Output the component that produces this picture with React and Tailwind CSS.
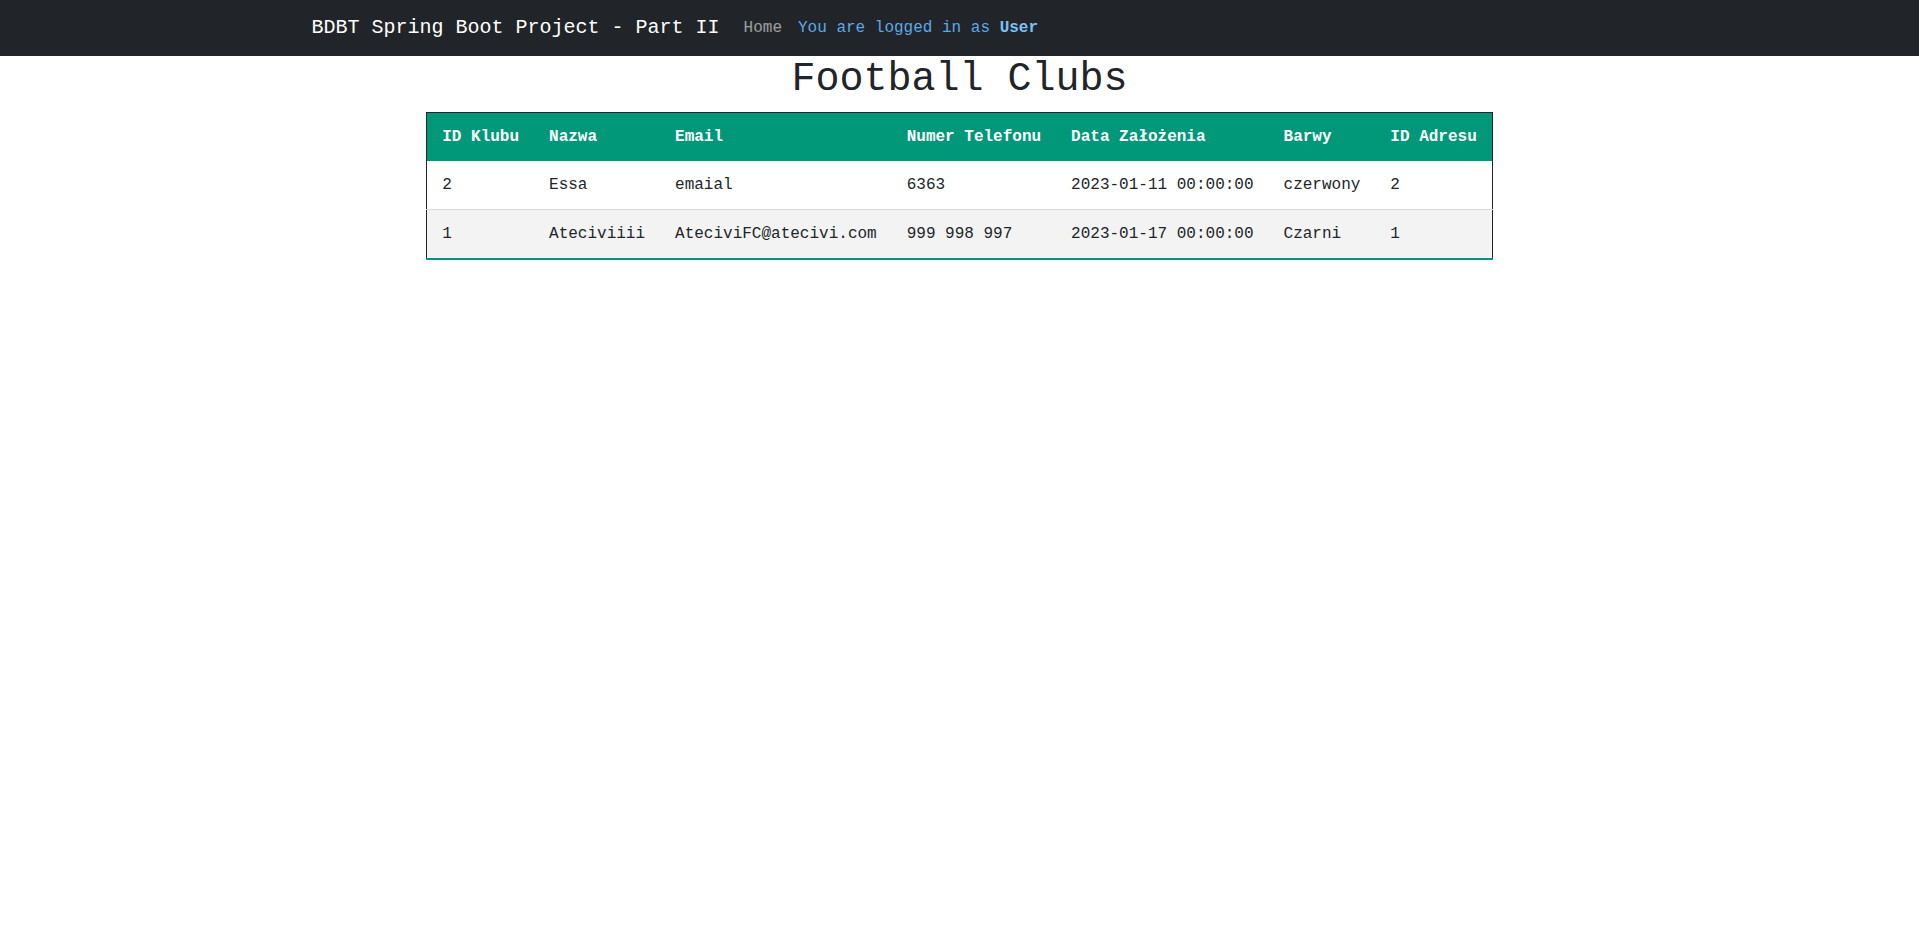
const clubs = [
  { id: 2, nazwa: 'Essa', email: 'emaial', tel: '6363', data: '2023-01-11 00:00:00', barwy: 'czerwony', adres: 2 },
  { id: 1, nazwa: 'Ateciviiii', email: 'AteciviFC@atecivi.com', tel: '999 998 997', data: '2023-01-17 00:00:00', barwy: 'Czarni', adres: 1 },
]

const headers = ['ID Klubu', 'Nazwa', 'Email', 'Numer Telefonu', 'Data Założenia', 'Barwy', 'ID Adresu']

export default function App() {
  return (
    <div className="bg-white text-[#212529] font-['Liberation_Mono','Courier_New',monospace]">
      <nav className="bg-[#212529] py-2">
        <div className="mx-auto flex max-w-[1320px] items-center px-3">
          <span className="mr-4 py-[5px] text-[20px] leading-[30px] text-white">
            BDBT Spring Boot Project - Part II
          </span>
          <a className="px-2 py-2 text-base leading-6 text-white/55">Home</a>
          <span className="px-2 py-2 text-base leading-6 text-[#5fa8e8]">
            You are logged in as <b className="text-[#7cc0f5]">User</b>
          </span>
        </div>
      </nav>

      <h1 className="mb-2 text-center text-[40px] leading-[48px] font-normal">Football Clubs</h1>

      <table className="mx-auto border-collapse border border-[#212529] text-base leading-6">
        <thead>
          <tr className="bg-[#009879] text-left text-white">
            {headers.map((h) => (
              <th key={h} className="px-[15px] py-3 font-bold">
                {h}
              </th>
            ))}
          </tr>
        </thead>
        <tbody>
          {clubs.map((c, i) => (
            <tr
              key={c.id}
              className={
                i === clubs.length - 1
                  ? 'border-b-2 border-[#009879] bg-[#f3f3f3]'
                  : 'border-b border-[#dddddd] bg-white'
              }
            >
              <td className="px-[15px] py-3">{c.id}</td>
              <td className="px-[15px] py-3">{c.nazwa}</td>
              <td className="px-[15px] py-3">{c.email}</td>
              <td className="px-[15px] py-3">{c.tel}</td>
              <td className="px-[15px] py-3">{c.data}</td>
              <td className="px-[15px] py-3">{c.barwy}</td>
              <td className="px-[15px] py-3">{c.adres}</td>
            </tr>
          ))}
        </tbody>
      </table>
    </div>
  )
}
